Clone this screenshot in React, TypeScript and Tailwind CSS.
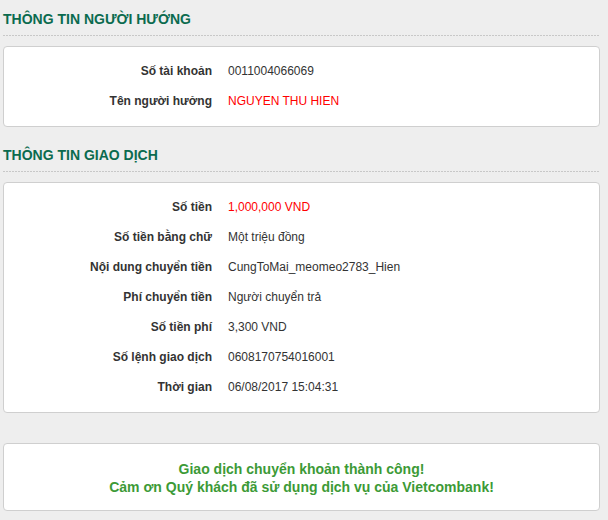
// Transfer receipt: beneficiary info, transaction info and a success note.

const font = { fontFamily: '"Liberation Sans", Arial, sans-serif' };

type Row = { label: string; value: string; red?: boolean };

const beneficiary: Row[] = [
  { label: "Số tài khoản", value: "0011004066069" },
  { label: "Tên người hưởng", value: "NGUYEN THU HIEN", red: true },
];

const transaction: Row[] = [
  { label: "Số tiền", value: "1,000,000 VND", red: true },
  { label: "Số tiền bằng chữ", value: "Một triệu đồng" },
  { label: "Nội dung chuyển tiền", value: "CungToMai_meomeo2783_Hien" },
  { label: "Phí chuyển tiền", value: "Người chuyển trả" },
  { label: "Số tiền phí", value: "3,300 VND" },
  { label: "Số lệnh giao dịch", value: "0608170754016001" },
  { label: "Thời gian", value: "06/08/2017 15:04:31" },
];

export default function App() {
  return (
    <div style={font} className="min-h-[520px] w-[608px] bg-[#eeeeee] pl-[3px] pr-[8px] pb-[6px]">
      <Section title="THÔNG TIN NGƯỜI HƯỚNG" rows={beneficiary} />
      <div className="mt-[9px]">
        <Section title="THÔNG TIN GIAO DỊCH" rows={transaction} />
      </div>

      <div className="mt-[30px] rounded-[4px] border border-[#cfcfcf] bg-white pt-[16px] pb-[14px] text-center text-[14px] font-bold leading-[18px] text-[#3c9a36]">
        <p>Giao dịch chuyển khoản thành công!</p>
        <p>Cảm ơn Quý khách đã sử dụng dịch vụ của Vietcombank!</p>
      </div>
    </div>
  );
}

function Section({ title, rows }: { title: string; rows: Row[] }) {
  return (
    <div>
      <h2 className="pt-[9px] pb-[6px] text-[14px] font-bold leading-[20px] text-[#0b6b4f]">{title}</h2>
      <div className="h-px bg-[repeating-linear-gradient(to_right,#c8c8c8_0_2px,transparent_2px_3px)]" />
      <div className="mt-[10px] rounded-[4px] border border-[#cfcfcf] bg-white pt-[9px] pb-[10px]">
        {rows.map((r) => (
          <div key={r.label} className="flex h-[30px] items-center text-[12px]">
            <span className="w-[208px] shrink-0 text-right font-bold text-[#333]">{r.label}</span>
            <span className={`ml-[16px] ${r.red ? "text-[#ff0000]" : "text-[#333]"}`}>{r.value}</span>
          </div>
        ))}
      </div>
    </div>
  );
}
